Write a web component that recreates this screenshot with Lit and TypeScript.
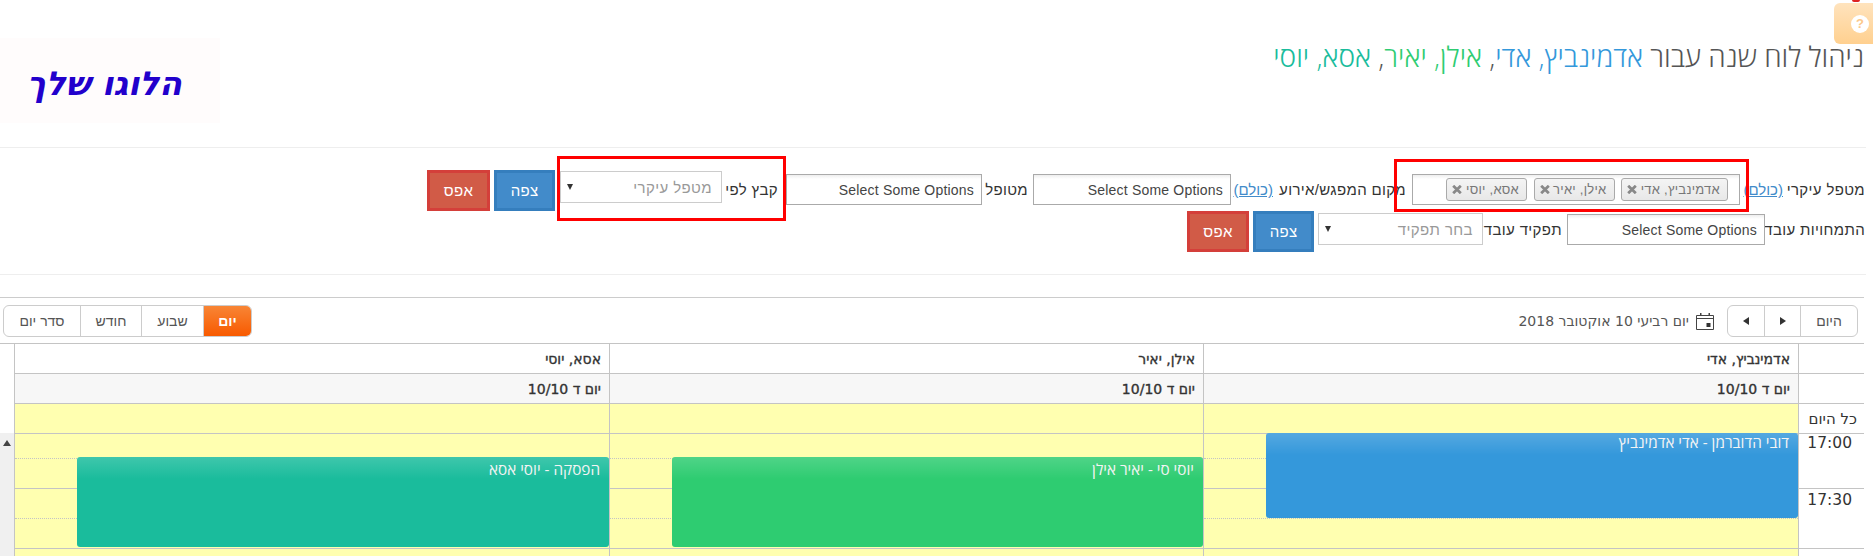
import { LitElement, html, css } from "lit";
import { customElement } from "lit/decorators.js";

const X = html`<svg class="x" width="10" height="9" viewBox="0 0 10 9"><path d="M1.2 .8L8.8 8.2M8.8 .8L1.2 8.2" stroke="#888" stroke-width="2.8" fill="none"/></svg>`;
const ARROW = html`<svg class="arrow" width="6" height="6" viewBox="0 0 6 6"><path d="M0 0H6L3 6Z" fill="#333"/></svg>`;

@customElement("app-root")
export class AppRoot extends LitElement {
  static styles = css`
    :host { display: block; width: 1873px; height: 556px; overflow: hidden; position: relative; background: #fff; font-family: "Liberation Sans", Arial, sans-serif; color: #333; font-size: 15px; direction: rtl; }
    .help { position: absolute; top: 3px; right: 0; width: 39px; height: 41px; box-sizing: border-box; padding-right: 4px; background: linear-gradient(#ffe3bd, #ffd08f); border-radius: 6px 0 0 6px; display: flex; align-items: center; justify-content: flex-start; }
    .help span { width: 18px; height: 18px; border-radius: 50%; background: #fff; color: #fcc88a; font: bold 13px/18px "Liberation Sans", sans-serif; text-align: center; }
    .redtop { position: absolute; top: 0; right: 13px; width: 8px; height: 2px; background: #d22; border-radius: 0 0 4px 4px; }
    .head { height: 147px; display: flex; justify-content: space-between; align-items: flex-start; border-bottom: 1px solid #eee; margin-right: 7px; }
    .title { font: 300 28px/34px "Open Sans", sans-serif; color: #555; margin-top: 39px; margin-right: 2px; white-space: nowrap; }
    .b { color: #3498db; } .g { color: #2ecc71; } .t { color: #1abc9c; }
    .logo { box-sizing: border-box; width: 220px; height: 85px; margin-top: 38px; background: #fffcfc; display: flex; align-items: center; justify-content: flex-start; padding: 6px 38px 0 0; color: #2200cc; font: italic bold 33px "DejaVu Sans", sans-serif; white-space: nowrap; }
    .filters { height: 126px; border-bottom: 1px solid #eee; margin-right: 7px; position: relative; }
    .row { display: flex; align-items: flex-start; margin-right: 1px; white-space: nowrap; }
    .r1 { padding-top: 22px; height: 41px; }
    .r2 { height: 41px; }
    .row > * { flex: none; }
    .lab { line-height: 31px; margin-top: 4px; letter-spacing: .35px; }
    .link { color: #428bca; text-decoration: underline; font-size: 15px; line-height: 31px; margin-top: 4px; }
    .box { box-sizing: border-box; height: 31px; border: 1px solid #aaa; background: linear-gradient(#eee, #fff 4px); display: flex; align-items: center; padding-right: 7px; font-size: 14px; letter-spacing: .2px; color: #444; margin-top: 4px; }
    .chips { padding-right: 11px; gap: 6.5px; }
    .chip { box-sizing: border-box; height: 23px; border: 1px solid #aaa; border-radius: 3px; background: linear-gradient(#f4f4f4, #e8e8e8); display: flex; align-items: center; justify-content: space-between; padding: 0 7px 0 5px; color: #777; font-size: 13px; letter-spacing: .25px; }
    .c1 { width: 107px; } .c2, .c3 { width: 81px; }
    .sel { box-sizing: border-box; height: 32px; border: 1px solid #ccc; display: flex; align-items: center; justify-content: space-between; padding: 0 9px 0 6px; color: #999; font-size: 15px; letter-spacing: .4px; background: #fff; }
    .btn { box-sizing: border-box; width: 61px; height: 41px; border: 3px solid; color: #fff; display: flex; align-items: center; justify-content: center; font-size: 15px; letter-spacing: .3px; }
    .view { background: #428bca; border-color: #357ebd; }
    .reset { background: #d15b47; border-color: #d43f3a; }

    .a1 { width: 78px; }
    .a2 { width: 38px; margin-right: 4px; }
    .a3 { width: 328px; margin-right: 5px; }
    .a4 { width: 128px; margin-right: 6px; }
    .a5 { width: 37px; margin-right: 5px; }
    .a6 { width: 198px; margin-right: 5px; }
    .a7 { width: 42px; margin-right: 5px; }
    .a8 { width: 196px; margin-right: 4px; }
    .a9 { width: 51px; margin-right: 8px; }
    .a10 { width: 162px; margin: 1px 5px 0 0; }
    .a11 { margin-right: 5px; }
    .a12 { width: 63px; margin-right: 4px; }
    .b1 { width: 95px; margin-top: 3px; }
    .b2 { width: 198px; margin: 3px 5px 0 0; }
    .b3 { width: 74px; margin: 3px 5px 0 0; }
    .b4 { width: 165px; margin: 2px 5px 0 0; }
    .b5 { margin-right: 4px; }
    .b6 { width: 62px; margin-right: 4px; }

    .mark { position: absolute; border: 3px solid #f00; box-sizing: border-box; }
    .m1 { left: 1394px; top: 159px; width: 355px; height: 53px; }
    .m2 { left: 557px; top: 156px; width: 229px; height: 65px; }

    .cal { margin: 22px 9px 0 0; border-top: 1px solid #ccc; font-family: "DejaVu Sans", sans-serif; color: #444; }
    .bar { height: 46px; display: flex; align-items: flex-start; padding: 7px 6px 0 3px; box-sizing: border-box; border-bottom: 1px solid #c4c4c4; }
    .grp { display: flex; height: 32px; box-sizing: border-box; border: 1px solid #ccc; border-radius: 6px; font: 14px "Liberation Sans", sans-serif; color: #555; overflow: hidden; }
    .grp div { display: flex; align-items: center; justify-content: center; border-left: 1px solid #ccc; box-sizing: border-box; }
    .grp div:last-child { border-left: 0; }
    .grp .on { background: linear-gradient(#f88535, #f85a00); color: #fff; font-weight: bold; width: 48px; }
    .today { width: 57px; } .nav { width: 36px; }
    .w1 { width: 62px; } .w2 { width: 61px; } .w3 { width: 76px; }
    .date { display: flex; align-items: center; gap: 7px; margin-right: 13px; height: 32px; font-size: 14px; color: #555; }
    .spacer { flex: 1; }
    .grid, .body { display: grid; grid-template-columns: 66px 595px 594px 595px 14px; }
    .c { box-sizing: border-box; border-left: 1px solid #c4c4c4; border-bottom: 1px solid #c4c4c4; padding-right: 8px; font-size: 14px; -webkit-text-stroke: .35px #333; display: flex; align-items: center; color: #333; height: 30px; }
    .h2 { background: #f7f7f7; } .h3 { background: #ffffb0; border-bottom: 0; }
    .ax { background: #fff; padding-right: 7px; font-size: 15px; -webkit-text-stroke: 0; border-bottom: 0; }
    .blank { background: #fff; }
    .gut { background: #fff; height: 30px; }
    .body { height: 124px; overflow: hidden; margin-top: -1px; position: relative; }
    .axis { box-sizing: border-box; border-left: 1px solid #c4c4c4; border-top: 1px solid #c4c4c4; }
    .as { box-sizing: border-box; height: 60px; border-bottom: 1px solid #c4c4c4; padding: 2px 12px 0 0; font-size: 15.5px; color: #333; line-height: 18px; }
    .as.first { height: 55px; padding-top: 0; }
    .col { position: relative; background: #ffffb0; border-left: 1px solid #c4c4c4; border-top: 1px solid #c4c4c4; box-sizing: border-box; }
    .s { box-sizing: border-box; height: 30px; border-bottom: 1px solid #c4c4c4; }
    .s.d { border-bottom: 1px dotted #c4c4c4; }
    .s.f { height: 25px; }
    .ev { position: absolute; right: 0; left: 62px; box-sizing: border-box; border-radius: 3px; color: #f4f4f4; font: 15.3px/16px "Open Sans", sans-serif; padding: 4px 9px 0 0; background-image: linear-gradient(rgba(255,255,255,.16), rgba(255,255,255,0) 22px); }
    .ev.blue { top: -1px; height: 85px; background-color: #3498db; padding-top: 1px; }
    .ev.green { top: 23px; height: 90px; background-color: #2ecc71; }
    .ev.teal { top: 23px; height: 90px; background-color: #1abc9c; }
    .sb { background: #f0f0f0; display: flex; justify-content: center; padding-top: 7px; box-sizing: border-box; }
    .sb svg { display: block; }
  `;

  render() {
    return html`
      <div class="help"><span>?</span></div><div class="redtop"></div>
      <div class="head">
        <div class="title">ניהול לוח שנה עבור <span class="b">אדמינביץ, אדי</span>, <span class="g">אילן, יאיר</span>, <span class="t">אסא, יוסי</span></div>
        <div class="logo">הלוגו שלך</div>
      </div>
      <div class="filters">
        <div class="row r1">
          <div class="lab a1">מטפל עיקרי</div>
          <a class="link a2">(כולם)</a>
          <div class="box chips a3">
            <div class="chip c1">אדמינביץ, אדי ${X}</div>
            <div class="chip c2">אילן, יאיר ${X}</div>
            <div class="chip c3">אסא, יוסי ${X}</div>
          </div>
          <div class="lab a4">מקום המפגש/אירוע</div>
          <a class="link a5">(כולם)</a>
          <div class="box a6">Select Some Options</div>
          <div class="lab a7">מטופל</div>
          <div class="box a8">Select Some Options</div>
          <div class="lab a9">קבץ לפי</div>
          <div class="sel a10">מטפל עיקרי ${ARROW}</div>
          <div class="btn view a11">צפה</div>
          <div class="btn reset a12">אפס</div>
        </div>
        <div class="row r2">
          <div class="lab b1">התמחויות עובד</div>
          <div class="box b2">Select Some Options</div>
          <div class="lab b3">תפקיד עובד</div>
          <div class="sel b4">בחר תפקיד ${ARROW}</div>
          <div class="btn view b5">צפה</div>
          <div class="btn reset b6">אפס</div>
        </div>
      </div>
      <div class="mark m1"></div>
      <div class="mark m2"></div>
      <div class="cal">
        <div class="bar">
          <div class="grp">
            <div class="today">היום</div>
            <div class="nav"><svg width="6" height="8" viewBox="0 0 6 8"><path d="M0 0L6 4L0 8Z" fill="#333"/></svg></div>
            <div class="nav"><svg width="6" height="8" viewBox="0 0 6 8"><path d="M6 0L0 4L6 8Z" fill="#333"/></svg></div>
          </div>
          <div class="date">
            <svg width="18" height="17" viewBox="0 0 18 17"><path d="M.5 2.5H17.5V16.5H.5Z M.5 5.5H17.5" fill="none" stroke="#444"/><path d="M4 0h1.5v3H4ZM12.5 0H14v3h-1.5Z" fill="#444"/><rect x="10.5" y="10" width="4" height="4" fill="#333"/></svg>
            <span>יום רביעי 10 אוקטובר 2018</span>
          </div>
          <div class="spacer"></div>
          <div class="grp">
            <div class="on">יום</div>
            <div class="w1">שבוע</div>
            <div class="w2">חודש</div>
            <div class="w3">סדר יום</div>
          </div>
        </div>
        <div class="grid">
          <div class="c blank"></div>
          <div class="c">אדמינביץ, אדי</div><div class="c">אילן, יאיר</div><div class="c">אסא, יוסי</div><div class="gut"></div>
          <div class="c blank"></div>
          <div class="c h2">יום ד 10/10</div><div class="c h2">יום ד 10/10</div><div class="c h2">יום ד 10/10</div><div class="gut"></div>
          <div class="c ax">כל היום</div>
          <div class="c h3"></div><div class="c h3"></div><div class="c h3"></div><div class="gut"></div>
        </div>
        <div class="body">
          <div class="axis"><div class="as first">17:00</div><div class="as">17:30</div><div class="as"></div></div>
          ${[
            ["blue", "דובי הדוברמן - אדי אדמינביץ"],
            ["green", "יוסי סי - יאיר אילן"],
            ["teal", "הפסקה - יוסי אסא"],
          ].map(
            ([cls, txt]) => html`<div class="col">
              <div class="s f d"></div><div class="s"></div><div class="s d"></div><div class="s"></div><div class="s d"></div>
              <div class="ev ${cls}">${txt}</div>
            </div>`
          )}
          <div class="sb"><svg width="8" height="6" viewBox="0 0 8 6"><path d="M4 0L8 6H0Z" fill="#444"/></svg></div>
        </div>
      </div>
    `;
  }
}
